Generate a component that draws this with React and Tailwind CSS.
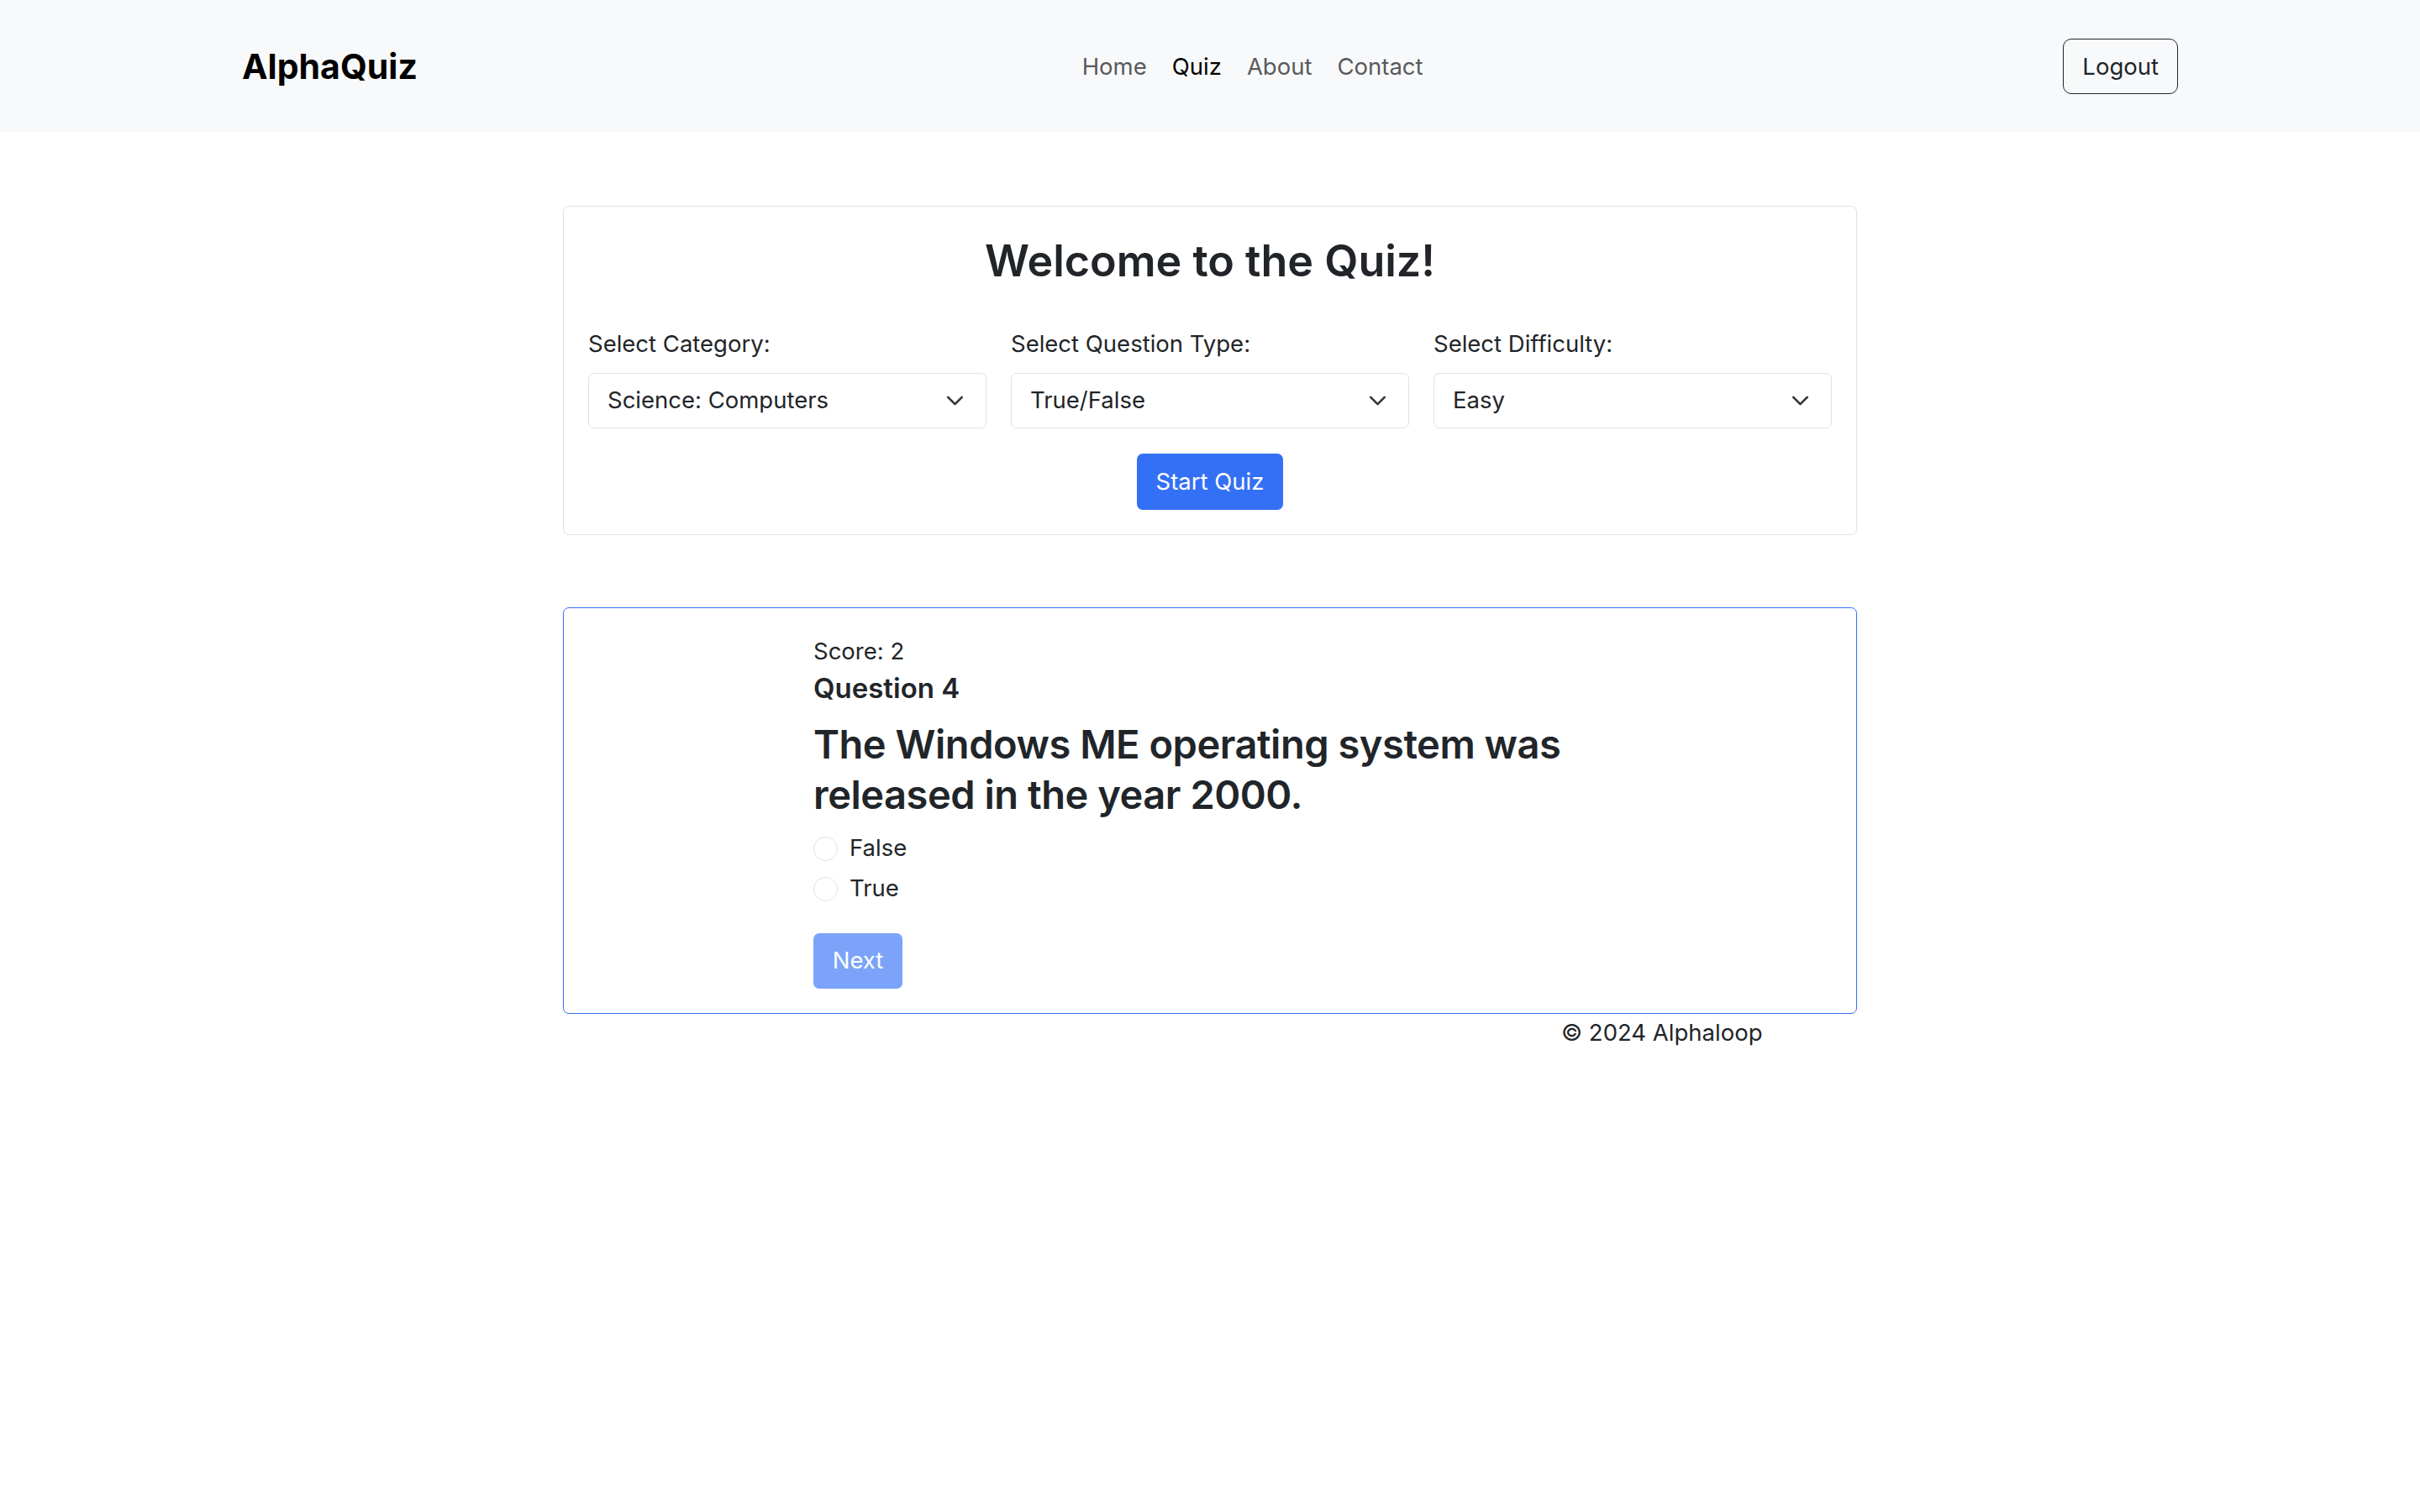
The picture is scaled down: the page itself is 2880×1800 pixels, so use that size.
import { useState } from 'react'

const NAV_LINKS = [
  { label: 'Home', active: false },
  { label: 'Quiz', active: true },
  { label: 'About', active: false },
  { label: 'Contact', active: false },
]

const SELECTS = [
  { label: 'Select Category:', value: 'Science: Computers' },
  { label: 'Select Question Type:', value: 'True/False' },
  { label: 'Select Difficulty:', value: 'Easy' },
]

const Chevron = () => (
  <svg className="w-[29px] h-[22px] shrink-0" viewBox="0 0 16 16" fill="none">
    <path d="m2 5 6 6 6-6" stroke="#343a40" strokeWidth="2" strokeLinecap="round" strokeLinejoin="round" />
  </svg>
)

const Navbar = () => {
  return (
    <nav className="bg-[#f8f9fa] h-[157px] flex items-center">
      <div className="mx-auto w-[2304px] flex items-center">
        <a className="text-[41px] font-bold text-black mr-[29px] leading-[60px]">AlphaQuiz</a>
        <div className="flex-1 flex justify-center">
          <ul className="flex">
            {NAV_LINKS.map(link => (
              <li key={link.label}>
                <a className={`block px-[15px] leading-[44px] ${link.active ? 'text-black' : 'text-[#595a5c]'}`}>
                  {link.label}
                </a>
              </li>
            ))}
          </ul>
        </div>
        <button className="h-[66px] px-[22px] border border-[#212529] rounded-[10px] text-[#212529] leading-[44px]">
          Logout
        </button>
      </div>
    </nav>
  )
}

const Options = ({ options, selected, onSelect }) => {
  return (
    <div>
      {options.map(opt => (
        <label key={opt} className="h-[44px] mb-[4px] flex items-center gap-[14px] cursor-pointer">
          <span
            onClick={() => onSelect(opt)}
            className={`w-[29px] h-[29px] rounded-full border ${selected === opt ? 'border-[#3470f5] border-[9px]' : 'border-[#dee2e6]'}`}
          ></span>
          <span>{opt}</span>
        </label>
      ))}
    </div>
  )
}

export default function App() {
  const [answer, setAnswer] = useState(null)

  return (
    <div className="min-h-screen bg-white text-[#212529] font-['Inter',sans-serif] text-[27.5px] leading-[1.5]">
      <Navbar />

      <main className="w-[1540px] mx-auto pt-[88px]">
        {/* setup card */}
        <div className="border border-[#dee2e6] rounded-[7px] p-[29px]">
          <h2 className="text-center text-[52px] font-semibold leading-[62px] mt-[5px] mb-[45px]">
            Welcome to the Quiz!
          </h2>
          <div className="grid grid-cols-3 gap-x-[29px]">
            {SELECTS.map(item => (
              <div key={item.label}>
                <div className="leading-[44px] mb-[13px]">{item.label}</div>
                <div className="h-[66px] border border-[#dee2e6] rounded-[7px] pl-[22px] pr-[22px] flex items-center justify-between">
                  <span>{item.value}</span>
                  <Chevron />
                </div>
              </div>
            ))}
          </div>
          <div className="mt-[30px] flex justify-center">
            <button className="h-[67px] w-[174px] bg-[#3470f5] text-white rounded-[7px]">Start Quiz</button>
          </div>
        </div>

        {/* question card */}
        <div className="mt-[86px] border border-[#3470f5] rounded-[7px] p-[29px]">
          <div className="pl-[268px] w-[1210px]">
            <div className="leading-[44px]">Score: 2</div>
            <h5 className="text-[33px] font-semibold leading-[44px] mb-[15px]">Question 4</h5>
            <h3 className="text-[47px] font-semibold tracking-[-0.01em] leading-[60px] mb-[12px]">
              The Windows ME operating system was released in the year 2000.
            </h3>
            <Options options={['False', 'True']} selected={answer} onSelect={setAnswer} />
            <button
              disabled={!answer}
              className="mt-[27px] h-[66px] w-[106px] bg-[#7ba3f9] text-white rounded-[7px]"
            >
              Next
            </button>
          </div>
        </div>

        <footer className="pl-[1188px] leading-[44px]">© 2024 Alphaloop</footer>
      </main>
    </div>
  )
}
